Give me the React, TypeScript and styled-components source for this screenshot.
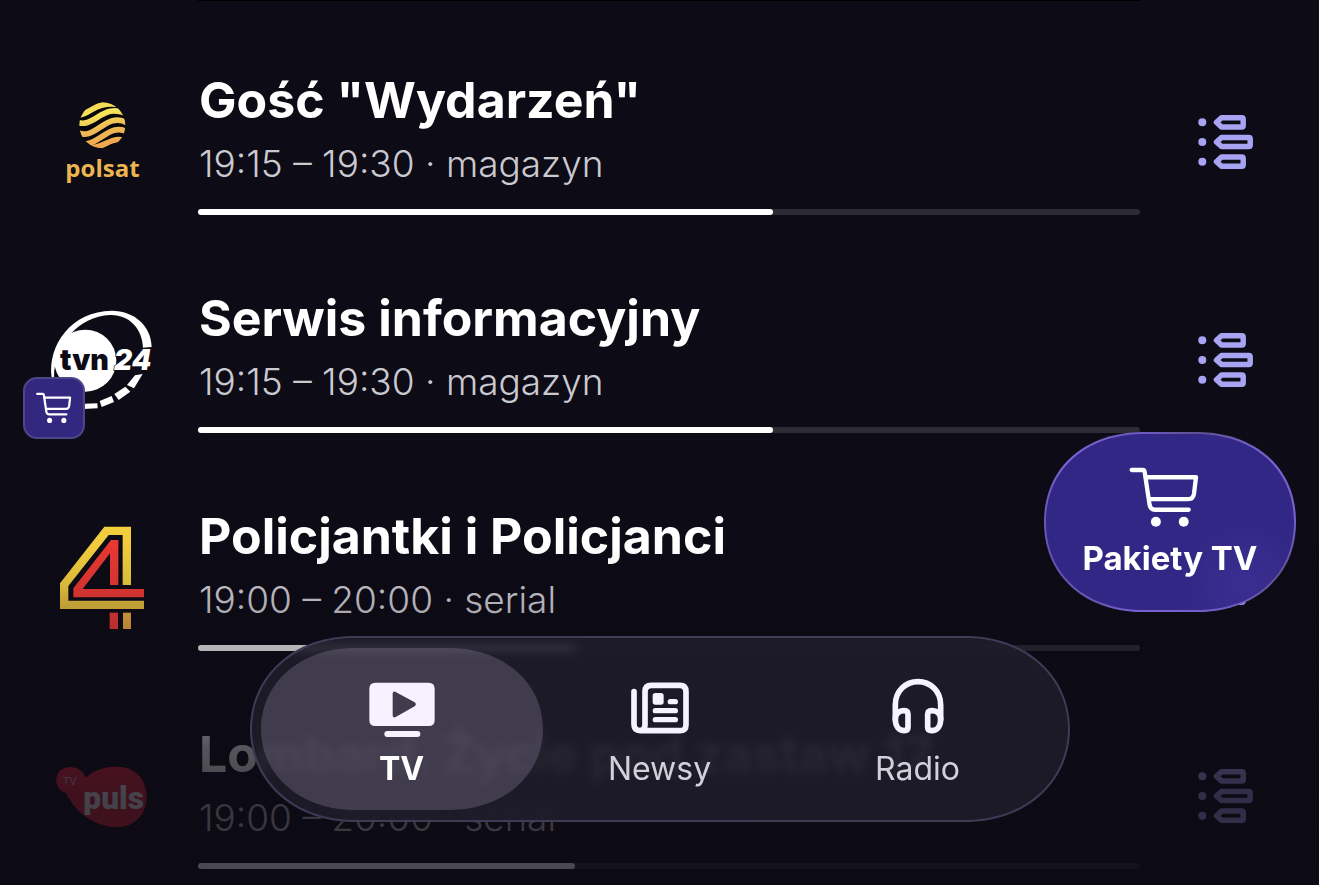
import React from "react";
import styled, { createGlobalStyle, css } from "styled-components";

const GlobalStyle = createGlobalStyle`
  * { box-sizing: border-box; }
  body {
    margin: 0;
    background: #0d0b15;
    color: #fff;
    font-family: Inter, "Liberation Sans", sans-serif;
  }
  button {
    font: inherit;
    color: inherit;
    background: none;
    border: 0;
    padding: 0;
    cursor: pointer;
  }
`;

const Page = styled.main`
  min-height: 100vh;
`;

const TopRule = styled.hr`
  height: 1px;
  margin: 0 179px 0 198px;
  border: 0;
  background: #000;
`;

const ProgrammeList = styled.ul`
  display: flex;
  flex-direction: column;
  gap: 72px;
  margin: 0;
  padding: 68px 0 0;
  list-style: none;
`;

const ProgrammeRow = styled.li`
  display: grid;
  grid-template-columns: 198px minmax(0, 1fr) 179px;
  align-items: center;
`;

const LogoCell = styled.div`
  position: relative;
  display: flex;
  height: 120px;
  padding-left: 42px;
`;

const LogoSvg = styled.svg`
  width: 120px;
  height: 120px;
`;

const PaidBadge = styled.span`
  position: absolute;
  left: 23px;
  top: 77px;
  display: flex;
  align-items: center;
  justify-content: center;
  width: 62px;
  height: 62px;
  border: 2px solid #4d4689;
  border-radius: 14px;
  background: #33277f;
`;

const Details = styled.div`
  display: flex;
  flex-direction: column;
`;

const Title = styled.h2`
  margin: 0;
  padding-left: 1px;
  font-size: 50px;
  font-weight: 650;
  line-height: 62px;
  white-space: nowrap;
`;

const Meta = styled.p`
  margin: 0 0 12px;
  padding-left: 1px;
  color: #cbc9d0;
  font-size: 37px;
  font-weight: 350;
  line-height: 66px;
  white-space: nowrap;
`;

const Track = styled.div`
  height: 6px;
  border-radius: 3px;
  background: #2d2b34;
`;

const Fill = styled.div`
  height: 100%;
  border-radius: 3px;
  background: #fff;
`;

const GuideButton = styled.button`
  display: flex;
  justify-self: start;
  margin-left: 58px;
`;

const BottomFade = styled.div`
  position: fixed;
  left: 0;
  right: 0;
  bottom: 0;
  height: 340px;
  pointer-events: none;
  background: linear-gradient(
    to bottom,
    rgba(13, 11, 21, 0) 0,
    rgba(13, 11, 21, 0.12) 55px,
    rgba(13, 11, 21, 0.3) 103px,
    rgba(13, 11, 21, 0.7) 205px,
    rgba(13, 11, 21, 0.78) 255px,
    rgba(13, 11, 21, 0.74) 340px
  );
`;

const PackagesButton = styled.button`
  position: fixed;
  right: 23px;
  bottom: 273px;
  display: flex;
  flex-direction: column;
  align-items: center;
  justify-content: center;
  gap: 10px;
  width: 252px;
  height: 180px;
  border: 2px solid transparent;
  border-radius: 100px / 90px;
  corner-shape: superellipse(1.1);
  background:
    radial-gradient(circle at 80% 84%, #3b2e92 0, rgba(51, 39, 133, 0) 24%) padding-box,
    linear-gradient(#332785, #332785) padding-box,
    linear-gradient(60deg, #574c96 0%, #7b62d6 30%, #6a59b8 60%, #5d528f 72%, #7b62d6 90%) border-box;
  font-size: 33px;
  font-weight: 700;
  line-height: 40px;

  svg {
    margin-right: 12px;
  }
`;

const NavBar = styled.nav`
  position: fixed;
  left: 50%;
  bottom: 63px;
  display: flex;
  width: 820px;
  height: 186px;
  padding: 10px 9px;
  border: 2px solid #3f3b57;
  border-radius: 104px / 93px;
  corner-shape: superellipse(1.05);
  background: rgba(32, 30, 43, 0.84);
  backdrop-filter: blur(4px);
  transform: translateX(-50%);
  overflow: hidden;
`;

const NavItem = styled.button<{ $active?: boolean }>`
  display: flex;
  flex: 1;
  flex-direction: column;
  align-items: center;
  gap: 10px;
  height: 162px;
  padding-top: 30px;
  border-radius: 94px / 81px;
  corner-shape: superellipse(1.05);
  color: #d3d0dc;
  font-size: 32px;
  line-height: 42px;

  & + & {
    margin-left: -24px;
  }

  ${({ $active }) =>
    $active &&
    css`
      background: rgba(190, 180, 215, 0.22);
      color: #fff;
      font-weight: 700;
    `}
`;

const NavSvg = styled.svg`
  flex: none;
  width: 68px;
  height: 60px;
  color: #f6f2ff;
`;

function CartIcon({ width, height }: { width: number; height: number }) {
  return (
    <svg width={width} height={height} viewBox="296 138 212 184" fill="none" stroke="#fff" strokeWidth="13" strokeLinecap="round" strokeLinejoin="round" aria-hidden="true">
      <path d="M303 147H336Q341 147 342 152L357 252Q360 267 373 267H475" />
      <path d="M347 169H497L491 219Q488 235 474 235H356" />
      <circle cx="376" cy="303" r="15" fill="#fff" stroke="none" />
      <circle cx="460" cy="303" r="15" fill="#fff" stroke="none" />
    </svg>
  );
}

function GuideIcon() {
  return (
    <svg width="56" height="56" viewBox="0 0 56 56" fill="none" stroke="#a9a3f3" strokeWidth="5.5" strokeLinejoin="round" aria-hidden="true">
      <g fill="#a9a3f3" stroke="none">
        <circle cx="4.3" cy="8.3" r="4" />
        <circle cx="4.3" cy="28" r="4" />
        <circle cx="4.3" cy="47.7" r="4" />
      </g>
      <path d="M18.5 8.3L23.5 3.7H43.7Q45.2 3.7 45.2 5.2V11.4Q45.2 12.9 43.7 12.9H23.5Z" />
      <path d="M18.5 28L23.5 23.4H50.7Q52.2 23.4 52.2 24.9V31.1Q52.2 32.6 50.7 32.6H23.5Z" />
      <path d="M18.5 47.7L23.5 43.1H43.7Q45.2 43.1 45.2 44.6V50.8Q45.2 52.3 43.7 52.3H23.5Z" />
    </svg>
  );
}

function PolsatLogo() {
  return (
    <LogoSvg viewBox="6 6 360 360" role="img" aria-label="Polsat">
      <defs>
        <clipPath id="globe">
          <circle cx="187" cy="136" r="69" />
        </clipPath>
        <linearGradient id="gold" gradientUnits="userSpaceOnUse" x1="170" y1="68" x2="200" y2="204">
          <stop offset="0" stopColor="#f2d552" />
          <stop offset="0.25" stopColor="#f7e55c" />
          <stop offset="0.55" stopColor="#efbb54" />
          <stop offset="1" stopColor="#f0a552" />
        </linearGradient>
      </defs>
      <g clipPath="url(#globe)">
        <circle cx="187" cy="136" r="69" fill="#08070c" />
        <g fill="none" stroke="url(#gold)" strokeWidth="17">
          <path d="M108 106C155 106 160 58 250 76" />
          <path d="M108 126C166 148 186 64 264 103" />
          <path d="M108 155C166 190 196 90 264 130" />
          <path d="M108 184C166 219 204 120 264 157" />
          <path d="M140 200C190 214 214 160 264 186" />
        </g>
      </g>
      <text x="76" y="290" fill="#ecb550" fontFamily='"Open Sans", sans-serif' fontWeight="700" fontSize="72">polsat</text>
    </LogoSvg>
  );
}

function Tvn24Logo() {
  return (
    <LogoSvg viewBox="96 15 360 360" fill="#fff" role="img" aria-label="TVN24">
      <path d="M125 248C112 150 185 48 305 47C372 47 424 92 425 156L399 158C397 100 356 58 300 60C205 64 132 150 132 248Z" />
      <circle cx="226" cy="197" r="93" />
      <path d="M375 241L398 237L372 280L351 270Z" />
      <path d="M346 275L361 290L326 315L313 297Z" />
      <path d="M305 303L312 321L275 336L269 318Z" />
      <path d="M205 327L262 325L263 340L205 343Z" />
      <text x="150" y="225" fill="#0d0b15" fontFamily="Inter, sans-serif" fontWeight="900" fontSize="86">tvn</text>
      <text x="312" y="225" fill="#fff" stroke="#0d0b15" strokeWidth="4" paintOrder="stroke" fontFamily="Inter, sans-serif" fontWeight="900" fontStyle="italic" fontSize="84">24</text>
    </LogoSvg>
  );
}

function Tv4Logo() {
  return (
    <LogoSvg viewBox="6 24 360 360" role="img" aria-label="TV4">
      <defs>
        <linearGradient id="four" x1="0" y1="0" x2="0" y2="1">
          <stop offset="0" stopColor="#f2cd3c" />
          <stop offset="0.7" stopColor="#eecb3e" />
          <stop offset="0.9" stopColor="#deb83c" />
        </linearGradient>
      </defs>
      <path fill="url(#four)" d="M193 50H273V225H248V75H206L85 228V272H312V297H60V220Z" />
      <path fill="#e83833" d="M213 90H235V225H210V130L128 237H312V262H100V235Z" />
      <path fill="#ea3a34" d="M209 308H234V357H209Z" />
      <path fill="#eaa940" d="M249 308H273V357H249Z" />
    </LogoSvg>
  );
}

function PulsLogo() {
  return (
    <LogoSvg viewBox="6 -12 360 360" role="img" aria-label="TV Puls">
      <path fill="#e8243a" d="M49 120C49 96 67 81 90 81C112 81 130 94 138 113C154 94 190 80 230 80C285 80 320 118 320 170C320 222 285 261 232 261C170 261 110 225 78 159C60 154 49 139 49 120Z" />
      <text x="68" y="134" fill="#c7c3cd" fontFamily="Inter, sans-serif" fontSize="32">TV</text>
      <text x="130" y="208" fill="#ffffff" fontFamily="Roboto, sans-serif" fontWeight="900" fontSize="95">puls</text>
    </LogoSvg>
  );
}

function TvIcon() {
  return (
    <NavSvg viewBox="383 159 204 180" fill="currentColor" aria-hidden="true">
      <path fillRule="evenodd" d="M405 173H565Q583 173 583 191V285Q583 303 565 303H405Q387 303 387 285V191Q387 173 405 173ZM457 206V271Q457 280 466 276L523 244Q530 238 523 232L466 201Q457 197 457 206Z" />
      <rect x="432" y="318" width="108" height="18" rx="9" />
    </NavSvg>
  );
}

function NewsIcon() {
  return (
    <NavSvg viewBox="258 159 204 180" fill="none" stroke="currentColor" strokeWidth="17" strokeLinecap="round" strokeLinejoin="round" aria-hidden="true">
      <path d="M282 200V298Q282 317 301 317H420Q438 317 438 299V200Q438 181 420 181H334Q315 181 315 200V300Q315 315 301 317" />
      <rect x="338" y="204" width="33" height="35" rx="8" fill="currentColor" stroke="none" />
      <path d="M391 230H406M346 257H406M346 284H406" strokeWidth="16" />
    </NavSvg>
  );
}

function RadioIcon() {
  return (
    <NavSvg viewBox="253 159 204 180" fill="none" stroke="currentColor" strokeWidth="17" strokeLinecap="round" strokeLinejoin="round" aria-hidden="true">
      <path d="M287 283V240C287 198 318 170 355 170S423 198 423 240V283" />
      <path d="M287 283C287 266 298 257 314 257Q325 257 325 268V306Q325 317 314 317C298 317 287 304 287 283Z" />
      <path d="M423 283C423 266 412 257 396 257Q384 257 384 268V306Q384 317 396 317C412 317 423 304 423 283Z" />
    </NavSvg>
  );
}

interface Programme {
  title: string;
  meta: string;
  progress: number;
  logo: React.ReactNode;
  paid?: boolean;
}

const programmes: Programme[] = [
  { title: 'Gość "Wydarzeń"', meta: "19:15 – 19:30 · magazyn", progress: 61, logo: <PolsatLogo /> },
  { title: "Serwis informacyjny", meta: "19:15 – 19:30 · magazyn", progress: 61, logo: <Tvn24Logo />, paid: true },
  { title: "Policjantki i Policjanci", meta: "19:00 – 20:00 · serial", progress: 40, logo: <Tv4Logo /> },
  { title: "Lombard. Życie pod zastaw 17", meta: "19:00 – 20:00 · serial", progress: 40, logo: <PulsLogo /> },
];

export default function App() {
  return (
    <>
      <GlobalStyle />
      <Page>
        <TopRule />
        <ProgrammeList>
          {programmes.map((p) => (
            <ProgrammeRow key={p.title}>
              <LogoCell>
                {p.logo}
                {p.paid && (
                  <PaidBadge>
                    <CartIcon width={36} height={32} />
                  </PaidBadge>
                )}
              </LogoCell>
              <Details>
                <Title>{p.title}</Title>
                <Meta>{p.meta}</Meta>
                <Track role="progressbar" aria-label={p.title} aria-valuenow={p.progress} aria-valuemin={0} aria-valuemax={100}>
                  <Fill style={{ width: `${p.progress}%` }} />
                </Track>
              </Details>
              <GuideButton type="button" aria-label={`Program: ${p.title}`}>
                <GuideIcon />
              </GuideButton>
            </ProgrammeRow>
          ))}
        </ProgrammeList>
      </Page>
      <BottomFade />
      <PackagesButton type="button">
        <CartIcon width={71} height={61} />
        Pakiety TV
      </PackagesButton>
      <NavBar>
        <NavItem type="button" $active aria-current="page">
          <TvIcon />
          TV
        </NavItem>
        <NavItem type="button">
          <NewsIcon />
          Newsy
        </NavItem>
        <NavItem type="button">
          <RadioIcon />
          Radio
        </NavItem>
      </NavBar>
    </>
  );
}
